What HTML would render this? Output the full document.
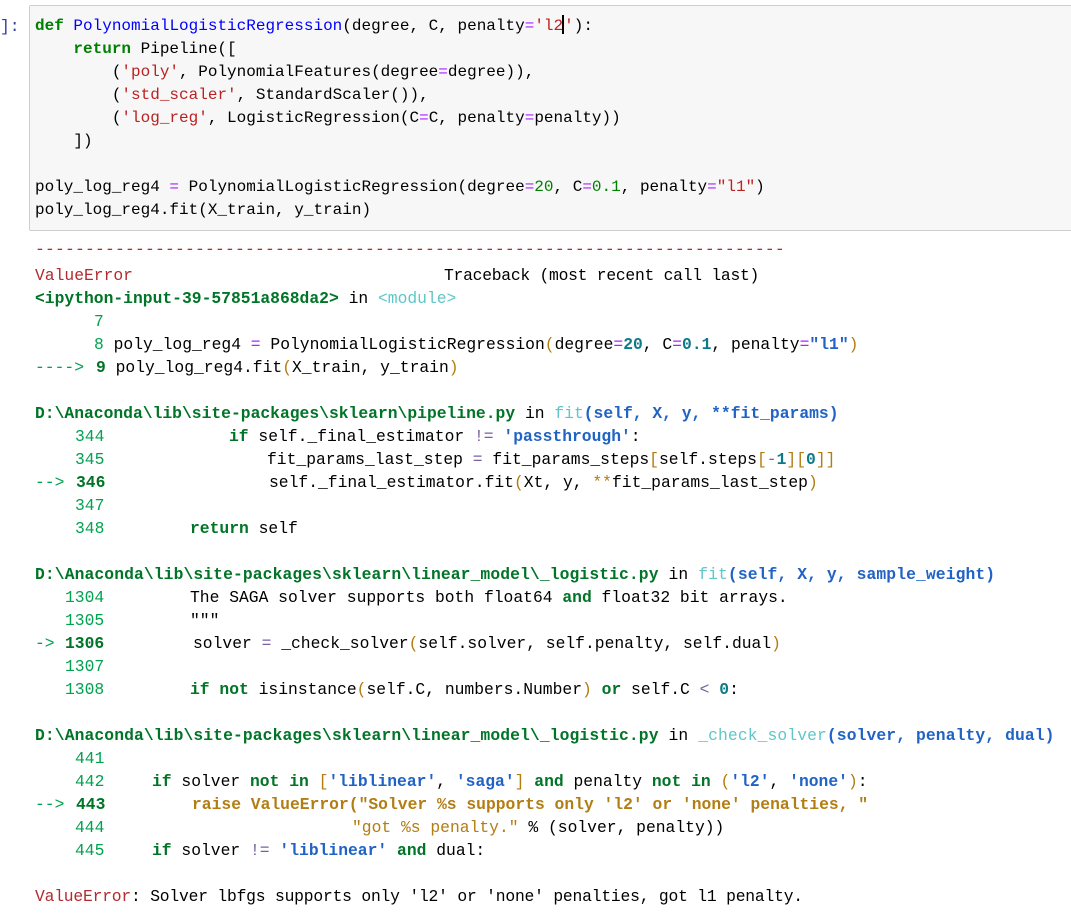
<!DOCTYPE html>
<html><head><meta charset="utf-8">
<style>
body{margin:0;width:1071px;height:921px;background:#fff;overflow:hidden;position:relative;font-family:"Liberation Mono","Noto Sans CJK SC",monospace;font-size:16.33px;color:#000}
.cell{position:absolute;left:29px;top:5px;width:1050px;height:224px;background:#f7f7f7;border:1px solid #cfcfcf;border-radius:2px}
.p{position:absolute;left:0;top:15px;line-height:23px;color:#303f9f}
.l{position:absolute;height:23px;line-height:23px;white-space:pre}
.cc{font-size:16px}
.k{color:#008000;font-weight:bold}
.f{color:#0000ff}
.s{color:#ba2121}
.o{color:#aa22ff}
.n{color:#008000}
.red{color:#b22b31}
.g{color:#007427;font-weight:bold}
.gn{color:#00a250}
.cy{color:#60c6c8}
.b{color:#2063c4;font-weight:bold}
.y{color:#b27d12}
.tl{color:#0d7a87;font-weight:bold}
.pk{color:#7a5fa0}
.cur{display:inline-block;width:2px;height:19px;background:#000;vertical-align:-4px;margin-left:-1px}
</style></head><body>
<div class="p">]:</div>
<div class="cell"></div>
<div class="l cc" style="left:35px;top:15px"><span class="k">def</span> <span class="f">PolynomialLogisticRegression</span>(degree, C, penalty<span class="o">=</span><span class="s">'l2</span><span class="cur"></span><span class="s">'</span>):</div>
<div class="l cc" style="left:35px;top:38px">    <span class="k">return</span> Pipeline([</div>
<div class="l cc" style="left:35px;top:61px">        (<span class="s">'poly'</span>, PolynomialFeatures(degree<span class="o">=</span>degree)),</div>
<div class="l cc" style="left:35px;top:84px">        (<span class="s">'std_scaler'</span>, StandardScaler()),</div>
<div class="l cc" style="left:35px;top:107px">        (<span class="s">'log_reg'</span>, LogisticRegression(C<span class="o">=</span>C, penalty<span class="o">=</span>penalty))</div>
<div class="l cc" style="left:35px;top:130px">    ])</div>
<div class="l cc" style="left:35px;top:176px">poly_log_reg4 <span class="o">=</span> PolynomialLogisticRegression(degree<span class="o">=</span><span class="n">20</span>, C<span class="o">=</span><span class="n">0.1</span>, penalty<span class="o">=</span><span class="s">"l1"</span>)</div>
<div class="l cc" style="left:35px;top:199px">poly_log_reg4.fit(X_train, y_train)</div>

<div class="l red" style="left:35px;top:238px;width:751px;overflow:hidden;letter-spacing:0.2px">---------------------------------------------------------------------------</div>
<div class="l red" style="left:35px;top:264px">ValueError</div>
<div class="l" style="left:444px;top:264px;letter-spacing:-0.25px">Traceback (most recent call last)</div>
<div class="l" style="left:35px;top:287px"><span class="g">&lt;ipython-input-39-57851a868da2&gt;</span> in <span class="cy">&lt;module&gt;</span></div>
<div class="l gn" style="left:94px;top:310px">7</div>
<div class="l" style="left:94px;top:333px"><span class="gn">8</span> poly_log_reg4 <span class="o">=</span> PolynomialLogisticRegression<span class="y">(</span>degree<span class="o">=</span><span class="tl">20</span>, C<span class="o">=</span><span class="tl">0.1</span>, penalty<span class="o">=</span><span class="b">"l1"</span><span class="y">)</span></div>
<div class="l gn" style="left:35px;top:356px">----&gt;</div>
<div class="l" style="left:96px;top:356px"><span class="g">9</span> poly_log_reg4.fit<span class="y">(</span>X_train, y_train<span class="y">)</span></div>

<div class="l" style="left:35px;top:402px"><span class="g">D:\Anaconda\lib\site-packages\sklearn\pipeline.py</span> in <span class="cy">fit</span><span class="b">(self, X, y, **fit_params)</span></div>
<div class="l gn" style="left:75px;top:425px">344</div>
<div class="l" style="left:229px;top:425px"><span class="g">if</span> self._final_estimator <span class="pk">!=</span> <span class="b">'passthrough'</span>:</div>
<div class="l gn" style="left:75px;top:448px">345</div>
<div class="l" style="left:267px;top:448px">fit_params_last_step <span class="pk">=</span> fit_params_steps<span class="y">[</span>self.steps<span class="y">[</span><span class="pk">-</span><span class="tl">1</span><span class="y">][</span><span class="tl">0</span><span class="y">]]</span></div>
<div class="l gn" style="left:35px;top:471px">--&gt;</div>
<div class="l g" style="left:76px;top:471px">346</div>
<div class="l" style="left:269px;top:471px">self._final_estimator.fit<span class="y">(</span>Xt, y, <span class="y">**</span>fit_params_last_step<span class="y">)</span></div>
<div class="l gn" style="left:75px;top:494px">347</div>
<div class="l gn" style="left:75px;top:517px">348</div>
<div class="l" style="left:190px;top:517px"><span class="g">return</span> self</div>

<div class="l" style="left:35px;top:563px;letter-spacing:0.1px"><span class="g">D:\Anaconda\lib\site-packages\sklearn\linear_model\_logistic.py</span> in <span class="cy">fit</span><span class="b">(self, X, y, sample_weight)</span></div>
<div class="l gn" style="left:65px;top:586px">1304</div>
<div class="l" style="left:190px;top:586px">The SAGA solver supports both float64 <span class="g">and</span> float32 bit arrays.</div>
<div class="l gn" style="left:65px;top:609px">1305</div>
<div class="l" style="left:190px;top:609px">"""</div>
<div class="l gn" style="left:35px;top:632px">-&gt;</div>
<div class="l g" style="left:65px;top:632px">1306</div>
<div class="l" style="left:193px;top:632px">solver <span class="pk">=</span> _check_solver<span class="y">(</span>self.solver, self.penalty, self.dual<span class="y">)</span></div>
<div class="l gn" style="left:65px;top:655px">1307</div>
<div class="l gn" style="left:65px;top:678px">1308</div>
<div class="l" style="left:190px;top:678px"><span class="g">if</span> <span class="g">not</span> isinstance<span class="y">(</span>self.C, numbers.Number<span class="y">)</span> <span class="g">or</span> self.C <span class="pk">&lt;</span> <span class="tl">0</span>:</div>

<div class="l" style="left:35px;top:724px;letter-spacing:0.1px"><span class="g">D:\Anaconda\lib\site-packages\sklearn\linear_model\_logistic.py</span> in <span class="cy">_check_solver</span><span class="b">(solver, penalty, dual)</span></div>
<div class="l gn" style="left:75px;top:747px">441</div>
<div class="l gn" style="left:75px;top:770px">442</div>
<div class="l" style="left:152px;top:770px"><span class="g">if</span> solver <span class="g">not</span> <span class="g">in</span> <span class="y">[</span><span class="b">'liblinear'</span>, <span class="b">'saga'</span><span class="y">]</span> <span class="g">and</span> penalty <span class="g">not</span> <span class="g">in</span> <span class="y">(</span><span class="b">'l2'</span>, <span class="b">'none'</span><span class="y">)</span>:</div>
<div class="l gn" style="left:35px;top:793px">--&gt;</div>
<div class="l g" style="left:76px;top:793px">443</div>
<div class="l y" style="left:192px;top:793px;font-weight:bold">raise ValueError("Solver %s supports only 'l2' or 'none' penalties, "</div>
<div class="l gn" style="left:75px;top:816px">444</div>
<div class="l" style="left:352px;top:816px"><span class="y">"got %s penalty."</span> % (solver, penalty))</div>
<div class="l gn" style="left:75px;top:839px">445</div>
<div class="l" style="left:152px;top:839px"><span class="g">if</span> solver <span class="pk">!=</span> <span class="b">'liblinear'</span> <span class="g">and</span> dual:</div>

<div class="l" style="left:35px;top:885px;letter-spacing:-0.2px"><span class="red">ValueError</span>: Solver lbfgs supports only 'l2' or 'none' penalties, got l1 penalty.</div>
</body></html>
